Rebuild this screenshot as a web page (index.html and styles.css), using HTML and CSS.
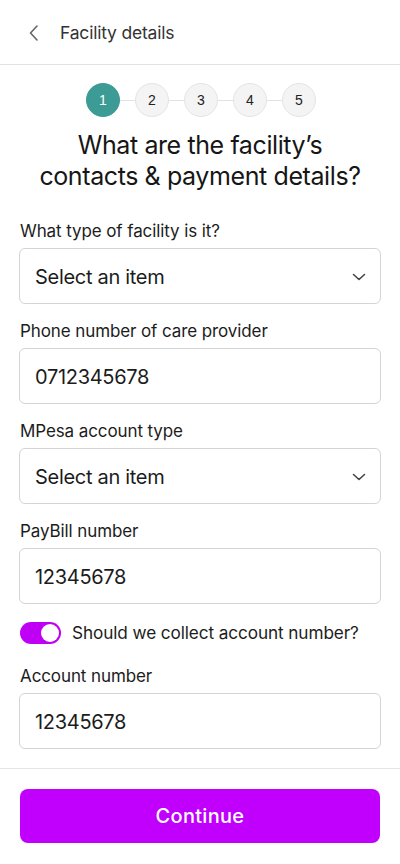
FILE: index.html
```html
<!DOCTYPE html>
<html lang="en">
<head>
<meta charset="utf-8">
<link rel="stylesheet" href="styles.css">
</head>
<body>
<div class="app">
  <header class="topbar">
    <svg class="back" width="12" height="18" viewBox="0 0 12 18"><path d="M9 2 L2.5 9 L9 16" fill="none" stroke="#666" stroke-width="1.6" stroke-linecap="round" stroke-linejoin="round"/></svg>
    <span class="topbar-title">Facility details</span>
  </header>
  <main class="content">
    <div class="stepper">
      <span class="step active">1</span><span class="line"></span>
      <span class="step">2</span><span class="line"></span>
      <span class="step">3</span><span class="line"></span>
      <span class="step">4</span><span class="line"></span>
      <span class="step">5</span>
    </div>
    <h1 class="heading">What are the facility’s<br>contacts &amp; payment details?</h1>
    <div class="field first">
      <label class="label">What type of facility is it?</label>
      <div class="box select"><span>Select an item</span>
        <svg width="14" height="8" viewBox="0 0 14 8"><path d="M1.5 1.5 L7 6.5 L12.5 1.5" fill="none" stroke="#444" stroke-width="1.6" stroke-linecap="round" stroke-linejoin="round"/></svg>
      </div>
    </div>
    <div class="field">
      <label class="label">Phone number of care provider</label>
      <div class="box"><span>0712345678</span></div>
    </div>
    <div class="field">
      <label class="label">MPesa account type</label>
      <div class="box select"><span>Select an item</span>
        <svg width="14" height="8" viewBox="0 0 14 8"><path d="M1.5 1.5 L7 6.5 L12.5 1.5" fill="none" stroke="#444" stroke-width="1.6" stroke-linecap="round" stroke-linejoin="round"/></svg>
      </div>
    </div>
    <div class="field">
      <label class="label">PayBill number</label>
      <div class="box"><span>12345678</span></div>
    </div>
    <div class="toggle-row">
      <span class="toggle"><span class="knob"></span></span>
      <span class="toggle-text">Should we collect account number?</span>
    </div>
    <div class="field after-toggle">
      <label class="label">Account number</label>
      <div class="box"><span>12345678</span></div>
    </div>
  </main>
  <footer class="footer">
    <button class="continue">Continue</button>
  </footer>
</div>
</body>
</html>
```
FILE: styles.css
```css
* { box-sizing: border-box; }
html, body { margin: 0; padding: 0; background: #fff; }
body { font-family: Inter, "Noto Sans", sans-serif; color: #1c1c1c; }
.app { width: 400px; height: 864px; display: flex; flex-direction: column; }
.topbar { height: 65px; flex: none; display: flex; align-items: center; padding-left: 28px; padding-top: 1px; border-bottom: 1px solid #e2e2e2; }
.back { margin-right: 20px; }
.topbar-title { font-size: 17.5px; color: #333; letter-spacing: -0.2px; }
.content { flex: 1; padding: 18px 19px 0 19px; display: flex; flex-direction: column; }
.stepper { display: flex; align-items: center; justify-content: center; padding-left: 2px; }
.step { width: 34px; height: 34px; border-radius: 50%; background: #f4f4f4; border: 1px solid #e4e4e4; display: flex; align-items: center; justify-content: center; font-family: "Liberation Sans", Arial, sans-serif; font-size: 14px; color: #222; }
.step.active { background: #3d9b95; border-color: #3d9b95; color: #fff; }
.line { width: 15px; height: 1px; background: #e2e2e2; }
.heading { margin: 13px 0 0; font-size: 25px; font-weight: 400; line-height: 31px; text-align: center; letter-spacing: -0.4px; color: #161616; }
.field { display: flex; flex-direction: column; margin-top: 16px; }
.field.first { margin-top: 28px; }
.field.after-toggle { margin-top: 21px; }
.label { font-size: 17px; line-height: 22px; margin: 0 0 6px 1px; letter-spacing: -0.1px; color: #1c1c1c; }
.box { height: 56px; border: 1px solid #d4d4d4; border-radius: 6px; display: flex; align-items: center; justify-content: space-between; padding: 2px 14px 0 15px; font-size: 20px; letter-spacing: -0.3px; color: #1c1c1c; }
.toggle-row { display: flex; align-items: center; margin-top: 18px; padding-left: 1px; }
.toggle { width: 41px; height: 22px; border-radius: 11px; background: #c000f5; position: relative; flex: none; }
.knob { position: absolute; right: 2px; top: 2px; width: 18px; height: 18px; border-radius: 50%; background: #fff; }
.toggle-text { margin-left: 11px; font-size: 17.2px; line-height: 22px; letter-spacing: -0.1px; }
.footer { flex: none; border-top: 1px solid #e4e4e4; padding: 20px 20px 21px; }
.continue { display: block; width: 100%; height: 54px; border: none; border-radius: 8px; background: #c000fc; color: #fff; font-family: Inter, "Noto Sans", sans-serif; font-size: 20px; font-weight: 500; letter-spacing: 0.3px; }
```
